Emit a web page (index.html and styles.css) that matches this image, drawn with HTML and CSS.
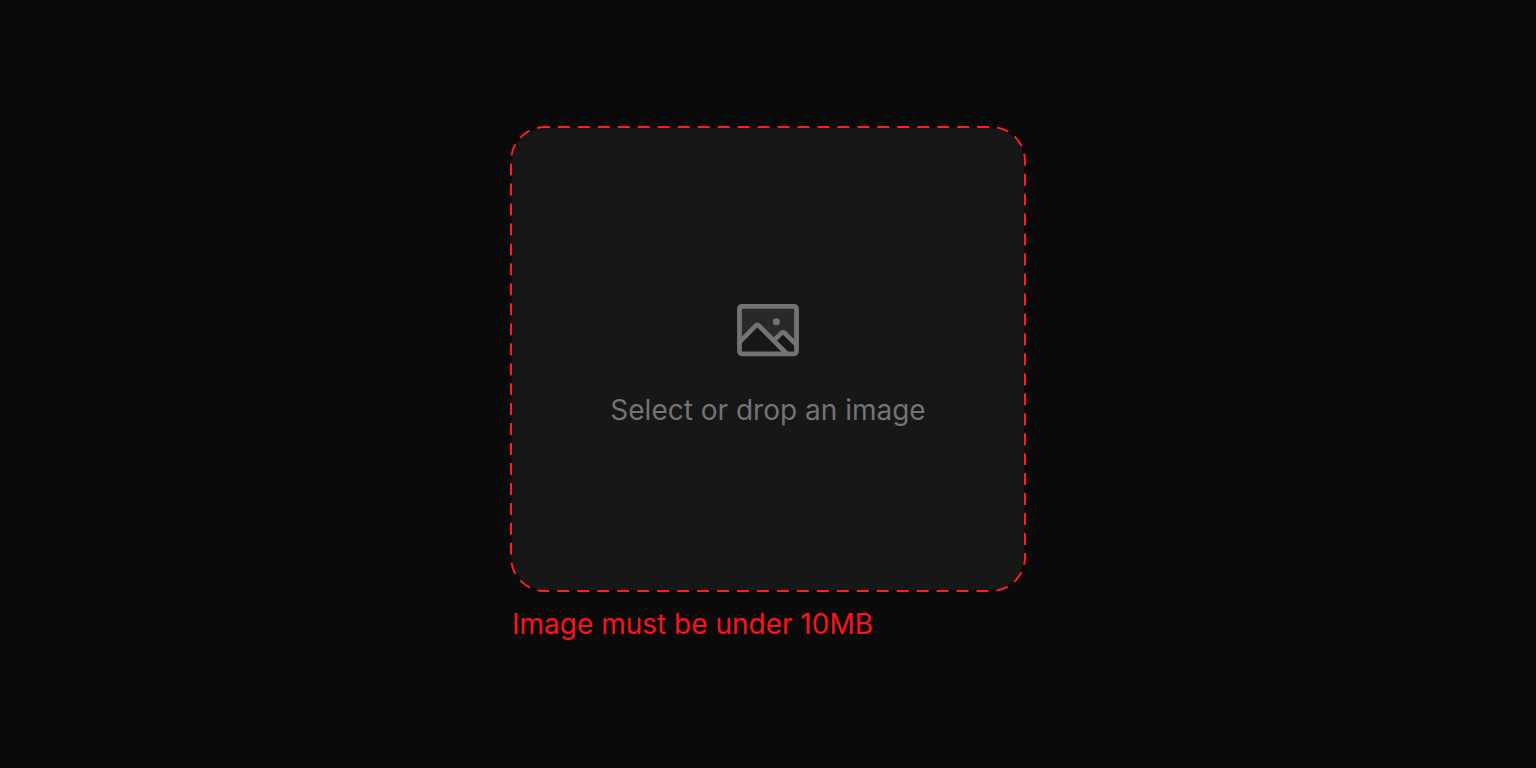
FILE: index.html
```
<!DOCTYPE html>
<html lang="en">
<head>
    <meta charset="UTF-8">
    <meta name="viewport" content="width=device-width, initial-scale=1.0">
    <title>Image upload</title>
    <link rel="stylesheet" href="styles.css">
</head>
<body>
    <form class="upload">
        <label class="dropzone" for="image">
            <svg class="outline" aria-hidden="true">
                <rect x="1" y="1" rx="34" pathLength="1901"/>
            </svg>
            <svg class="icon" viewBox="0 0 256 256" aria-hidden="true">
                <path class="icon-shade" d="M224 56v122.06l-39.72-39.72a8 8 0 0 0-11.31 0L147.31 164l-49.65-49.66a8 8 0 0 0-11.32 0L32 168.69V56a8 8 0 0 1 8-8h176a8 8 0 0 1 8 8Z"/>
                <rect class="icon-line" x="32" y="48" width="192" height="160" rx="8"/>
                <path class="icon-line" d="M147.31 164 173 138.34a8 8 0 0 1 11.31 0L224 178.06M32 168.69l54.34-54.35a8 8 0 0 1 11.32 0L191.31 208"/>
                <circle class="icon-dot" cx="156" cy="100" r="12"/>
            </svg>
            <span class="hint">Select or drop an image</span>
            <input class="file" type="file" id="image" accept="image/*" aria-invalid="true" aria-describedby="error">
        </label>
        <p class="error" id="error">Image must be under 10MB</p>
    </form>
</body>
</html>
```

FILE: styles.css
```
*{
    box-sizing: border-box;
    margin: 0;
    padding: 0;
}
body{
    display: flex;
    align-items: center;
    justify-content: center;
    min-height: 100vh;
    padding-bottom: 2px;
    background: #0a0a0a;
    font-family: Inter, "Liberation Sans", sans-serif;
    font-size: 28px;
    line-height: 32px;
}
.upload{
    display: flex;
    flex-direction: column;
    gap: 16px;
    width: 100%;
    max-width: 516px;
}
.dropzone{
    position: relative;
    display: flex;
    flex-direction: column;
    align-items: center;
    justify-content: center;
    gap: 26px;
    min-height: 466px;
    border: 2px solid transparent;
    border-radius: 35px;
    background: #171717;
    background-clip: padding-box;
    color: #737373;
    cursor: pointer;
}
/* dashed edge, drawn over the transparent border */
.outline{
    position: absolute;
    top: -2px;
    left: -2px;
    width: calc(100% + 4px);
    height: calc(100% + 4px);
    fill: none;
    stroke: #fb2024;
    stroke-width: 2;
    stroke-dasharray: 12 8;
    stroke-dashoffset: 7;
}
.outline rect{
    width: calc(100% - 2px);
    height: calc(100% - 2px);
}
.icon{
    width: 76px;
    height: 76px;
}
.icon-shade{
    fill: currentColor;
    opacity: 0.2;
}
.icon-line{
    fill: none;
    stroke: currentColor;
    stroke-width: 16;
    stroke-linecap: round;
    stroke-linejoin: round;
}
.icon-dot{
    fill: currentColor;
}
/* kept focusable, but out of sight */
.file{
    position: absolute;
    width: 1px;
    height: 1px;
    opacity: 0;
}
.error{
    padding: 0 2px;
    color: #fb141c;
}
```
